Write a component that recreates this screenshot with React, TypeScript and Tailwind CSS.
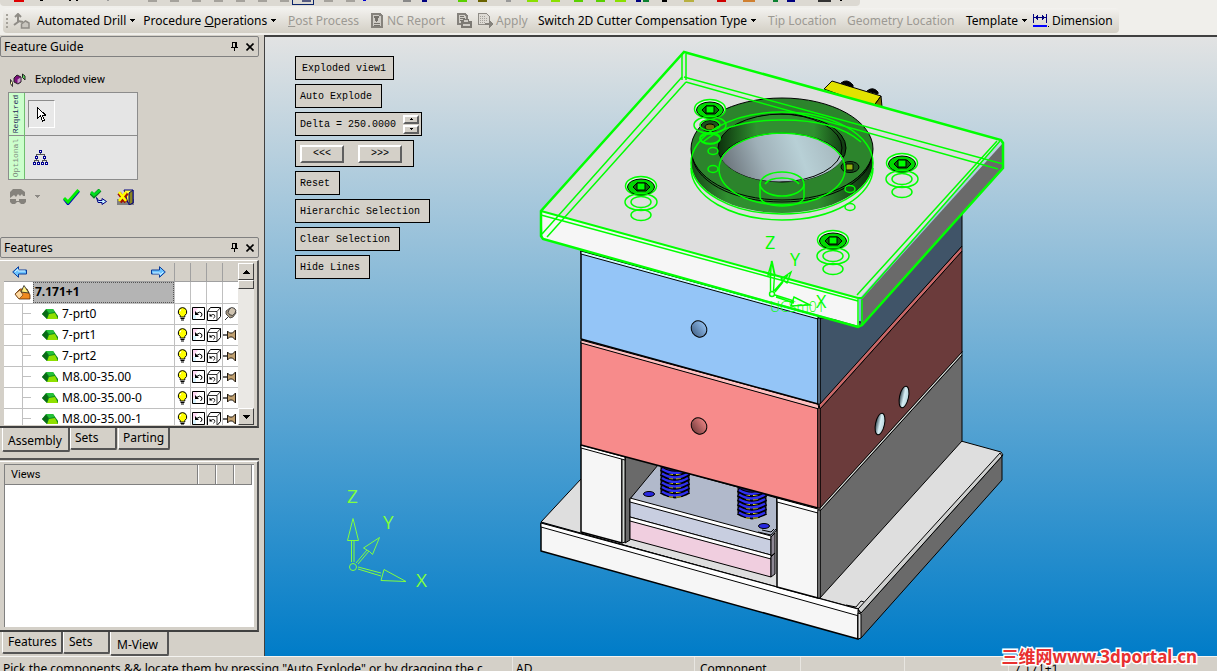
import { Fragment } from "react";
import type { ReactNode } from "react";

const uiFont = "font-['Noto_Sans','Noto_Sans_CJK_SC',sans-serif]";
const monoFont = "font-['Liberation_Mono',monospace]";

const parts = ["7-prt0", "7-prt1", "7-prt2", "M8.00-35.00", "M8.00-35.00-0", "M8.00-35.00-1"];

const screws = [
  { x: 710, y: 109 },
  { x: 641, y: 186 },
  { x: 902, y: 163 },
  { x: 833, y: 240 },
];

/* slivers of the toolbar that is scrolled off the top */
const slivers = [
  { x: 14, w: 10, c: "#e00000" }, { x: 40, w: 3, c: "#000" }, { x: 69, w: 2, c: "#000" }, { x: 76, w: 2, c: "#000" },
  { x: 107, w: 2, c: "#999" }, { x: 148, w: 9, c: "#a5a29c" }, { x: 170, w: 9, c: "#a5a29c" }, { x: 192, w: 9, c: "#a5a29c" },
  { x: 214, w: 9, c: "#a5a29c" }, { x: 236, w: 9, c: "#a5a29c" }, { x: 258, w: 9, c: "#a5a29c" }, { x: 280, w: 9, c: "#a5a29c" },
  { x: 302, w: 9, c: "#555a80" }, { x: 324, w: 9, c: "#a5a29c" }, { x: 346, w: 9, c: "#a5a29c" }, { x: 363, w: 3, c: "#0000d0" },
  { x: 403, w: 8, c: "#888" }, { x: 422, w: 5, c: "#000080" }, { x: 458, w: 9, c: "#5ad000" }, { x: 478, w: 9, c: "#6b6300" },
  { x: 506, w: 5, c: "#999" }, { x: 527, w: 11, c: "#8ae000" }, { x: 551, w: 9, c: "#8ae000" }, { x: 574, w: 9, c: "#5ad000" },
  { x: 596, w: 9, c: "#5ad000" }, { x: 615, w: 11, c: "#8ae000" }, { x: 636, w: 5, c: "#000080" }, { x: 643, w: 6, c: "#0a8030" },
  { x: 662, w: 5, c: "#000" }, { x: 684, w: 10, c: "#b8b040" }, { x: 717, w: 9, c: "#d00000" }, { x: 743, w: 12, c: "#d08030" },
  { x: 773, w: 5, c: "#0a8030" }, { x: 787, w: 8, c: "#000080" }, { x: 818, w: 13, c: "#333" }, { x: 840, w: 2, c: "#000" },
];

const Caret = ({ className = "ml-1" }: { className?: string }) => (
  <svg className={`${className} shrink-0`} width="5" height="3" shapeRendering="crispEdges">
    <path d="M0 0h5v1h-1v1h-1v1h-1v-1h-1v-1h-1z" fill="currentColor" />
  </svg>
);

const AxisIcon = () => (
  <svg width="17" height="16" viewBox="0 0 17 16" fill="none" stroke="#8f8c86" strokeWidth="2">
    <path d="M5 1v8l-4 3M2 4l3-3 3 3M5 8l5 1" />
    <path d="M8.500 11l4-3 3.500 2v5H8.500z" strokeWidth="1.500" fill="#c8c5be" />
  </svg>
);

const ReportIcon = () => (
  <svg width="12" height="15" viewBox="0 0 12 15" shapeRendering="crispEdges">
    <path d="M0 0h9l3 3v12H0z" fill="#85827c" />
    <path d="M2 2h6v1h2v10H2z" fill="#cfccc6" />
    <path d="M3 3h5v2H7v3H6v1H5V8H4V5H3zM3 10h6v1H3zM3 12h6v1H3z" fill="#75726c" />
  </svg>
);

const ReportLockIcon = () => (
  <svg width="15" height="15" viewBox="0 0 15 15" shapeRendering="crispEdges">
    <path d="M0 0h9l2 3v9H0z" fill="#85827c" />
    <path d="M2 2h6v1h1v7H2z" fill="#d2cfc8" />
    <path d="M3 3h4v1H3zM3 5h5v1H3zM3 7h3v1H3z" fill="#75726c" />
    <path d="M4 8h2V6h6v2h3v7H4z" fill="#7c7973" />
    <path d="M7 7h4v2H7zM6 11h7v2H6z" fill="#cfccc6" />
  </svg>
);

const ApplyIcon = () => (
  <svg width="16" height="15" viewBox="0 0 16 15" shapeRendering="crispEdges">
    <path d="M.5 .5h8l3 3v8H.5z" fill="#dedbd5" stroke="#8f8c86" />
    <path d="M2 3h6M2 5h8M2 7h8M2 9h6" stroke="#a5a29c" strokeDasharray="1 1" />
    <path d="M7 10h4V7l5 4-5 4v-3H7z" fill="#85827c" />
  </svg>
);

const DimensionIcon = () => (
  <svg width="16" height="13" viewBox="0 0 16 13" shapeRendering="crispEdges">
    <path d="M0 0h1v9H0zM13 0h1v9h-1zM1 3h12v1H1zM3 2h1v3H3zM2 3h1v1H2zM4 1h1v5H4zM9 1h1v5H9zM10 2h1v3h-1z" fill="#000080" />
    <path d="M0 11h14v2H0z" fill="#0000ff" />
    <path d="M15 12h1v1h-1z" fill="#000" />
  </svg>
);

const PinIcon = () => (
  <svg width="7" height="9" viewBox="0 0 7 9" shapeRendering="crispEdges">
    <path d="M1 0h5v5h1v1H4v3H3V6H0V5h1zM2 1v4h2V1z" fill="#000" fillRule="evenodd" />
  </svg>
);

const CloseIcon = () => (
  <svg width="8" height="8" viewBox="0 0 8 8">
    <path d="M.5 .5l7 7M7.500 .5l-7 7" stroke="#000" strokeWidth="1.600" />
  </svg>
);

const PanelTitle = ({ children }: { children: ReactNode }) => (
  <div className="flex h-[21px] shrink-0 items-center border border-[#808080] rounded-xs bg-[#d4d0c8] pl-[3px] pr-1">
    <h2 className="flex-1 text-[12px]">{children}</h2>
    <button type="button" aria-label="Pin panel" className="mr-2"><PinIcon /></button>
    <button type="button" aria-label="Close panel"><CloseIcon /></button>
  </div>
);

const Toolbar = () => (
  <div className="h-[35px] shrink-0 bg-[#f0efeb]">
    <div className="h-[6px] w-[860px] rounded-b-sm bg-[#dcd9d2]">
      <svg width="860" height="6" shapeRendering="crispEdges">
        {slivers.map((s) => (
          <rect key={s.x} x={s.x} y="0" width={s.w} height={s.w > 4 ? 2 : 1} fill={s.c} />
        ))}
        <path d="M292.500 0v4.500h21V0" fill="none" stroke="#0a246a" />
      </svg>
    </div>
    <div className="pt-[2px] pl-[3px]">
      <div className="flex h-[25px] w-[1116px] items-center rounded bg-linear-to-b from-[#f3f2ef] to-[#d3cfc5] text-[12px] text-black whitespace-nowrap">
        <svg width="3" height="16" className="ml-[3px] mr-1 shrink-0" shapeRendering="crispEdges">
          <path d="M1 1v14" stroke="#a5a29a" strokeWidth="2" strokeDasharray="2 2" />
        </svg>
        <div className="flex w-[266px] shrink-0 items-center">
          <AxisIcon />
          <button type="button" className="flex items-center ml-[7px]">Automated Drill<Caret /></button>
          <button type="button" className="flex items-center ml-2">
            <span>Procedure <u>O</u>perations</span><Caret />
          </button>
        </div>
        <div className="flex w-[259px] shrink-0 items-center pl-[9px] text-[#9c9993]">
          <button type="button" disabled><u>P</u>ost Process</button>
          <button type="button" disabled className="ml-3 flex items-center gap-1"><ReportIcon />NC Report</button>
          <button type="button" disabled aria-label="Lock report" className="ml-3"><ReportLockIcon /></button>
          <button type="button" disabled className="ml-[6px] flex items-center gap-[2px]"><ApplyIcon />Apply</button>
        </div>
        <button type="button" className="flex w-[230px] shrink-0 items-center">Switch 2D Cutter Compensation Type<Caret /></button>
        <button type="button" disabled className="w-[79px] shrink-0 text-left text-[#9c9993]">Tip Location</button>
        <button type="button" disabled className="w-[119px] shrink-0 text-left text-[#9c9993]">Geometry Location</button>
        <button type="button" className="flex w-[67px] shrink-0 items-center">Template<Caret /></button>
        <button type="button" className="flex items-center gap-[3px]"><DimensionIcon />Dimension</button>
      </div>
    </div>
  </div>
);

const FeatureGuide = () => (
  <section className="h-[201px] shrink-0">
    <PanelTitle>Feature Guide</PanelTitle>
    <div className="pl-2 pt-3">
      <div className="flex h-[22px] items-center gap-[9px]">
        <svg width="18" height="15" viewBox="0 0 18 15">
          <path d="M2.500 6.500l2 3v4l-2-3z" fill="#ffffb0" stroke="#333" />
          <path d="M6 5l3-3 4 2v5l-3 2-4-2z" fill="#7a107a" stroke="#222" />
          <path d="M9.500 6.500l3-2v4l-3 2z" fill="#c9a0c9" />
          <path d="M14.500 1l2.500 2v4l-2.500-2.500z" fill="#60e060" stroke="#222" />
        </svg>
        <span className="text-[11px] font-['Roboto',sans-serif]">Exploded view</span>
      </div>
      <div className={`mt-px flex w-[130px] border border-[#8c8c8c] bg-[#e5e5e5] ${monoFont}`}>
        <div className="flex w-4 flex-col border-r border-[#6fbf6f] bg-[#ccffcc]">
          <div className="flex h-[43px] items-center justify-center border-b border-[#8c8c8c]">
            <span className="-rotate-90 text-[8px] text-[#222255]">Required</span>
          </div>
          <div className="flex h-[43px] items-center justify-center">
            <span className="-rotate-90 text-[8px] text-[#7d8a7d]">Optional</span>
          </div>
        </div>
        <div className="flex flex-1 flex-col">
          <div className="flex h-[43px] items-center border-b border-[#8c8c8c] pl-[3px]">
            <button type="button" aria-label="Select component" className="flex h-[28px] w-[27px] items-center justify-center border border-t-[#8c8c8c] border-l-[#8c8c8c] border-r-white border-b-white bg-[#e8e8e8]">
              <svg width="9" height="15" viewBox="0 0 9 15" shapeRendering="crispEdges">
                <path d="M.5 .5v11l3-2.500 2 5 2-1-2-4.500h3.500z" fill="#fff" stroke="#000" />
              </svg>
            </button>
          </div>
          <div className="flex h-[43px] items-center pl-2">
            <button type="button" aria-label="Select tree">
              <svg width="15" height="15" viewBox="0 0 15 15" shapeRendering="crispEdges">
                <path d="M7 3h1v1h4v2h-1V5H4v1H3V4h4zM3 9h1v1h2v2H5v-1H2v1H1v-2h2zM11 9h1v1h2v2h-1v-1h-3v1H9v-2h2z" fill="#555" />
                <path d="M6 0h3v3H6zM2 6h3v3H2zM10 6h3v3h-3zM0 12h3v3H0zM4 12h3v3H4zM8 12h3v3H8zM12 12h3v3h-3z" fill="#000090" />
                <path d="M7 1h1v1H7zM3 7h1v1H3zM11 7h1v1h-1zM1 13h1v1H1zM5 13h1v1H5zM9 13h1v1H9zM13 13h1v1h-1z" fill="#fff" />
              </svg>
            </button>
          </div>
        </div>
      </div>
      <div className="mt-2 flex items-center">
        <button type="button" disabled aria-label="Preview" className="flex items-center text-[#8c8984]">
          <svg width="19" height="17" viewBox="0 0 19 17" fill="#85827c">
            <path d="M2 4l3-3h8l4 3v4h-2l-1-2-2 2-2-2-2 3-2-2-4 3z" />
            <path d="M2 11h6v2h3v-2h7v3l-2 2h-3l-2-2H9l-2 2H4l-2-2z" />
          </svg>
          <Caret className="ml-2" />
        </button>
        <button type="button" aria-label="OK" className="ml-[23px]">
          <svg width="17" height="16" viewBox="0 0 17 16">
            <path d="M1 10l4 5L16 2" fill="none" stroke="#0000c0" strokeWidth="2.500" />
            <path d="M1 9l4 4L15.500 1" fill="none" stroke="#00ee00" strokeWidth="3" />
          </svg>
        </button>
        <button type="button" aria-label="Apply and continue" className="ml-[10px]">
          <svg width="17" height="16" viewBox="0 0 17 16">
            <path d="M1 4l3 3 6-6" fill="none" stroke="#087a20" strokeWidth="4" />
            <path d="M1 3l3 3 6-5" fill="none" stroke="#00dd20" strokeWidth="2.500" />
            <path d="M6.500 8.500l2 3h3.500v-2l4.500 3-4.500 3v-2H8z" fill="#c0f0ff" stroke="#000080" />
          </svg>
        </button>
        <button type="button" aria-label="Exit" className="ml-[10px]">
          <svg width="17" height="16" viewBox="0 0 17 16">
            <path d="M0 10h17v6H0z" fill="#808080" />
            <path d="M7 1h9v13h-5z" fill="#ffff40" stroke="#000080" />
            <path d="M12 4l4-3v13l-4 2z" fill="#8a8420" stroke="#000080" />
            <path d="M2 4l7 9M10 4l-7 9" stroke="#a01000" strokeWidth="4" />
            <path d="M2 3l7 9M9 3l-7 9" stroke="#ffff00" strokeWidth="2.500" />
          </svg>
        </button>
      </div>
    </div>
  </section>
);

const HeaderArrow = ({ flip = false }: { flip?: boolean }) => (
  <svg width="15" height="12" viewBox="0 0 15 12" className={flip ? "rotate-180" : ""}>
    <path d="M.7 6L6.500 .7V4h8v4h-8v3.300z" fill="#6cc4ff" stroke="#0a3c9a" />
    <path d="M3 6l3-3v2h7" fill="none" stroke="#d0f0ff" />
  </svg>
);

const PartIcon = () => (
  <svg width="16" height="12" viewBox="0 0 16 12">
    <path d="M0 6l4-5h7l5 7v3H5z" fill="#0c8a1c" />
    <path d="M4 1h7l2 3-6 1z" fill="#25c03a" />
    <path d="M5 11l2-5 6-1 3 6z" fill="#8fe000" />
    <path d="M0 6l4-4 2 3-1 6z" fill="#0a6a18" />
  </svg>
);

const BulbIcon = () => (
  <svg width="11" height="14" viewBox="0 0 11 14" className="mx-auto">
    <path d="M5.500 .6a4.300 4.300 0 0 1 2.300 7.900v1.500H3.200V8.500A4.300 4.300 0 0 1 5.500 .6z" fill="#ffff00" stroke="#000" strokeWidth="1" />
    <path d="M3.500 11.500h4M4 13h3" stroke="#000" strokeWidth="1.200" />
    <path d="M4 2.500l-1 2" stroke="#fff" />
  </svg>
);

const BoxIcon = () => (
  <svg width="13" height="13" viewBox="0 0 13 13" className="mx-auto">
    <path d="M.5 .5h12v12H.5z" fill="#fff" stroke="#000" />
    <path d="M1 1h5L1 8z" fill="#ffd8f4" />
    <path d="M1 8h3v4H1z" fill="#d8f4ff" />
    <path d="M4.500 6.500Q8 4 9.500 6t-1 4" fill="none" stroke="#000" />
    <path d="M3 4v4h4z" fill="#000" />
  </svg>
);

const CubeIcon = () => (
  <svg width="14" height="14" viewBox="0 0 14 14" className="mx-auto" fill="#fff" stroke="#000">
    <path d="M.5 4.500l3-4h10v9l-3.500 4H.5z" />
    <path d="M.5 4.500H10l3.500-4M10 4.500v9" strokeWidth=".8" />
    <path d="M3.500 8.500q3-2 4-.5t-1 3.500" fill="none" strokeWidth=".8" />
    <path d="M2.500 6.500v3h3z" fill="#000" stroke="none" />
  </svg>
);

const TackIcon = ({ tilted = false }: { tilted?: boolean }) =>
  tilted ? (
    <svg width="13" height="14" viewBox="0 0 13 14" className="mx-auto" stroke="#333" strokeWidth=".8">
      <path d="M1 13l3-3" stroke="#000" />
      <path d="M2 7l4 4 3-1 3-4-1-4-5-1-4 3z" fill="#a89880" />
      <ellipse cx="8" cy="4.500" rx="3.500" ry="4" fill="#cfc3b0" transform="rotate(35 8 4.500)" />
    </svg>
  ) : (
    <svg width="14" height="12" viewBox="0 0 14 12" className="mx-auto">
      <path d="M0 6h4" stroke="#000" strokeWidth="1.200" />
      <path d="M4.500 2l2 2h3l3-3v10l-3-3h-3l-2 2z" fill="#c0a070" stroke="#221a10" />
    </svg>
  );

const ScrollButton = ({ up = false }: { up?: boolean }) => (
  <button
    type="button"
    aria-label={up ? "Scroll up" : "Scroll down"}
    className="flex h-[17px] w-4 shrink-0 items-center justify-center border border-t-white border-l-white border-r-[#404040] border-b-[#404040] bg-[#d4d0c8]"
  >
    <svg width="7" height="4" className={up ? "rotate-180" : ""} shapeRendering="crispEdges">
      <path d="M0 0h7v1h-1v1h-1v1h-1v1h-1v-1h-1v-1h-1v-1h-1z" />
    </svg>
  </button>
);

const Features = () => (
  <section className="shrink-0">
    <PanelTitle>Features</PanelTitle>
    <div className="mt-[2px] flex h-[168px] border-t border-t-white border-r-2 border-b-2 border-r-[#555] border-b-[#404040] pl-1 pr-[3px] pt-[2px] pb-px">
      <div className="flex-1 overflow-hidden bg-white">
        <table className="w-full table-fixed border-collapse text-[12px]">
          <colgroup>
            <col />
            <col className="w-4" />
            <col className="w-4" />
            <col className="w-4" />
            <col className="w-4" />
          </colgroup>
          <thead>
            <tr className="h-[18px] bg-[#d4d0c8]">
              <th className="border-b border-[#a0a0a0] px-2 py-0">
                <div className="flex justify-between">
                  <HeaderArrow />
                  <HeaderArrow flip />
                </div>
              </th>
              {[0, 1, 2, 3].map((n) => (
                <th key={n} className="border-l border-b border-[#a0a0a0] p-0" />
              ))}
            </tr>
          </thead>
          <tbody>
            <tr className="h-[22px]">
              <td className="border-b border-[#c0c0c0] p-0">
                <div className="flex h-[21px] items-center">
                  <svg width="17" height="15" viewBox="0 0 17 15" className="ml-[10px] mr-[2px] shrink-0">
                    <path d="M1 9l5-5h7l3 6v4H5z" fill="#f08a20" stroke="#5a2a00" strokeWidth=".8" />
                    <path d="M1 9l5-4 3 5-4 4z" fill="#ffd9a0" stroke="#5a2a00" strokeWidth=".6" />
                    <path d="M7 7l3-6.500L15 8z" fill="#fff080" stroke="#222" strokeWidth=".8" />
                  </svg>
                  <span className="flex h-[21px] flex-1 items-center border border-dotted border-[#555] bg-[#b4b4b4] pl-px font-bold">7.171+1</span>
                </div>
              </td>
              {[0, 1, 2, 3].map((n) => (
                <td key={n} className="border-l border-b border-[#c0c0c0]" />
              ))}
            </tr>
            {parts.map((name, i) => (
              <tr key={name} className="h-[21px]">
                <td className="border-b border-[#c0c0c0] p-0">
                  <div className="flex h-5 items-center">
                    <span className="ml-[18px] flex h-5 w-5 shrink-0 items-center border-l border-[#c0c0c0]">
                      <span className="h-px w-2 bg-[#c0c0c0]" />
                    </span>
                    <PartIcon />
                    <span className="ml-1">{name}</span>
                  </div>
                </td>
                <td className="border-l border-b border-[#c0c0c0] p-0"><BulbIcon /></td>
                <td className="border-l border-b border-[#c0c0c0] p-0"><BoxIcon /></td>
                <td className="border-l border-b border-[#c0c0c0] p-0"><CubeIcon /></td>
                <td className="border-l border-b border-[#c0c0c0] p-0"><TackIcon tilted={i === 0} /></td>
              </tr>
            ))}
          </tbody>
        </table>
      </div>
      <div className="flex w-4 flex-col bg-[#eae8e4]">
        <ScrollButton up />
        <div className="h-[9px] border border-t-white border-l-white border-r-[#404040] border-b-[#404040] bg-[#d4d0c8]" />
        <div className="flex-1" />
        <ScrollButton />
      </div>
    </div>
  </section>
);

const Tab = ({ active = false, className, children }: { active?: boolean; className: string; children: ReactNode }) => (
  <button
    type="button"
    className={`${className} shrink-0 border-l border-l-white border-r-2 border-b-2 border-r-[#555] border-b-[#555] rounded-b-xs text-left text-[12px] leading-4 ${
      active ? "h-6 pt-1" : "h-[22px]"
    }`}
  >
    {children}
  </button>
);

const Views = () => (
  <section className="mt-[6px] flex min-h-0 flex-1 flex-col border-t-2 border-t-[#555]">
    <div className="mt-px flex flex-1 flex-col border-t border-t-white border-r-2 border-b-2 border-r-[#555] border-b-[#404040] pl-1 pr-[3px] pt-[2px] pb-[3px]">
      <div className="flex-1 border-t border-l border-[#808080] bg-white pr-[2px]">
        <div className="flex h-5 border-r border-b border-[#808080] bg-[#d4d0c8] text-[11px]">
          <h2 className="flex-1 pl-[6px] leading-[19px] font-['Roboto',sans-serif]">Views</h2>
          {[0, 1, 2].map((n) => (
            <span key={n} className="w-[18px] border-l border-[#808080] shadow-[inset_1px_0_0_#fff]" />
          ))}
        </div>
      </div>
    </div>
  </section>
);

const Box = ({ children }: { children: ReactNode }) => (
  <button type="button" className="h-6 border border-black bg-[#d4d0c8] pl-1 pr-[9px] text-left">
    {children}
  </button>
);

const raised = "border-2 border-t-white border-l-white border-r-[#606060] border-b-[#606060] bg-[#d4d0c8]";

const ExplodePanel = () => (
  <div className={`relative flex w-[150px] flex-col items-start gap-1 pl-[30px] pt-[19px] text-[10px] text-black whitespace-nowrap ${monoFont}`}>
    <div className="flex h-6 items-center border border-black bg-[#d4d0c8] pl-[6px] pr-[7px]">Exploded view1</div>
    <Box>Auto Explode</Box>
    <div className="flex h-6 items-center border border-black bg-[#d4d0c8] pl-1 pr-[2px]">
      <label htmlFor="delta">Delta =&nbsp;</label>
      <input id="delta" type="text" defaultValue="250.0000" className="w-[54px] bg-transparent outline-none" />
      <span className="ml-px flex flex-col">
        <button type="button" aria-label="Increase delta" className={`${raised} flex h-[9px] w-4 items-center justify-center`}>
          <svg width="3" height="2" shapeRendering="crispEdges"><path d="M1 0h1v1h1v1H0V1h1z" /></svg>
        </button>
        <button type="button" aria-label="Decrease delta" className={`${raised} mt-px flex h-[9px] w-4 items-center justify-center`}>
          <svg width="3" height="2" shapeRendering="crispEdges"><path d="M0 0h3v1H2v1H1V1H0z" /></svg>
        </button>
      </span>
    </div>
    <div className="flex h-[27px] items-center gap-[14px] border border-black bg-[#d4d0c8] pl-1 pr-[11px]">
      <button type="button" className={`${raised} h-[18px] w-11 leading-3`}>&lt;&lt;&lt;</button>
      <button type="button" className={`${raised} h-[18px] w-11 leading-3`}>&gt;&gt;&gt;</button>
    </div>
    <Box>Reset</Box>
    <Box>Hierarchic Selection</Box>
    <Box>Clear Selection</Box>
    <Box>Hide Lines</Box>
  </div>
);

const Spring = ({ x, y }: { x: number; y: number }) => (
  <g>
    <path d={`M${x - 14} ${y - 4}h28v26q-14 12 -28 0z`} fill="#1a1a70" />
    {[0, 1, 2, 3, 4, 5].map((n) => (
      <Fragment key={n}>
        <path d={`M${x - 14} ${y + n * 4.5 - 1}q14 8 28 0`} fill="none" stroke="#000" strokeWidth="4.400" />
        <path d={`M${x - 13} ${y + n * 4.5 - 1}q13 8 26 0`} fill="none" stroke="#3030f0" strokeWidth="2.400" />
        <path d={`M${x - 6} ${y + n * 4.5 + 4.5}h4m3 0h5`} stroke="#e8e020" />
      </Fragment>
    ))}
  </g>
);

const Screw = ({ x, y }: { x: number; y: number }) => (
  <g fill="none" stroke="#00ff00" strokeWidth="1.500">
    <ellipse cx={x} cy={y} rx="15.500" ry="9.500" fill="#e8f8e8" />
    <ellipse cx={x} cy={y + 1} rx="13.500" ry="8" fill="#00d800" stroke="#000" strokeWidth="1" />
    <path d={`M${x - 8} ${y + 1}l4 -4h9l4 4l-4 4h-9z`} fill="#0a6a0a" stroke="#000" strokeWidth="1" />
    <path d={`M${x - 4} ${y - 3}h8v7h-8z`} fill="#00ff00" stroke="#000" strokeWidth="1" />
    <ellipse cx={x} cy={y + 16} rx="16" ry="8.500" />
    <ellipse cx={x} cy={y + 16} rx="10" ry="5.500" />
    <ellipse cx={x} cy={y + 29} rx="10" ry="5.500" />
  </g>
);

const Axes = () => (
  <g fill="none" stroke="#80ff40" strokeWidth="1">
    <circle cx="353" cy="567" r="3.500" />
    <path d="M351.500 562V541M354 562V541M347.500 540.500l5.500-22 5.500 22z" />
    <path d="M356 563l11-13M358 564l11-13M363.500 548l16-10.500-7 17-3-3z" />
    <path d="M358 567l23 6M358 569l23 7M381 580.500l3-11 22 12z" />
  </g>
);

const Mold = () => (
  <svg className="absolute inset-0 h-full w-full" viewBox="265 37 952 619" preserveAspectRatio="xMinYMin meet">
    <defs>
      <linearGradient id="bowl" x1="0" x2="1" y1="0.200" y2="0">
        <stop offset="0" stopColor="#6c757c" />
        <stop offset="0.300" stopColor="#9fb0b8" />
        <stop offset="0.600" stopColor="#b8d0d6" />
        <stop offset="1" stopColor="#a0b0b6" />
      </linearGradient>
      <linearGradient id="wall" x1="0" x2="1">
        <stop offset="0" stopColor="#0c300c" />
        <stop offset="0.300" stopColor="#309030" />
        <stop offset="0.750" stopColor="#309030" />
        <stop offset="1" stopColor="#103810" />
      </linearGradient>
      <linearGradient id="rim" x1="0" x2="1">
        <stop offset="0" stopColor="#184818" />
        <stop offset="0.200" stopColor="#2f8f2f" />
        <stop offset="0.700" stopColor="#2f8f2f" />
        <stop offset="1" stopColor="#0c2c0c" />
      </linearGradient>
      <linearGradient id="bore" x1="0" x2="1">
        <stop offset="0" stopColor="#354a54" />
        <stop offset="0.500" stopColor="#d6eef4" />
        <stop offset="1" stopColor="#b8d4dc" />
      </linearGradient>
      <linearGradient id="blueBore" x1="0" x2="1">
        <stop offset="0" stopColor="#4a6a90" />
        <stop offset="1" stopColor="#8fbdee" />
      </linearGradient>
      <linearGradient id="redBore" x1="0" x2="1">
        <stop offset="0" stopColor="#7a4040" />
        <stop offset="1" stopColor="#e88080" />
      </linearGradient>
      <clipPath id="hole">
        <ellipse cx="782" cy="148" rx="64" ry="34" />
      </clipPath>
    </defs>

    <g stroke="#000" strokeWidth="1" strokeLinejoin="round">
      {/* base plate */}
      <path d="M541 522L581 479L961 441L1001 452L1003 455L858 610z" fill="#dedede" />
      <path d="M541 523L858 609V639L541 551z" fill="#f6f6f6" strokeWidth="1.500" />
      <path d="M541 523L858 609L861 612L859 616L541 527z" fill="#fff" />
      <path d="M858 610l3 3L1002 456V480L861 638L858 639z" fill="#6a6a6a" />
      <path d="M858 609L1000 453L1002 456L861 613z" fill="#cfd0cf" />
      <path d="M858 613v26l3-1v-24z" fill="#e0e0e0" />
      <path d="M846 605l10 2 5-6 3 1" fill="none" />

      {/* ejector plates */}
      <path d="M625 456L660 465L630 499V540L625 543z" fill="#6a6a6a" />
      <path d="M658 465L777 498V530L771 537L630 499z" fill="#b1b9cb" />
      <path d="M630 499L771 537V555L630 517z" fill="#c8cee0" />
      <path d="M630 498L771 536V540L630 502z" fill="#fff" />
      <path d="M630 520L771 558V577L630 539z" fill="#f0cedf" />
      <path d="M630 517L771 555V559L630 521z" fill="#fff" />
      <path d="M771 537l4-4v20l-4 3zM771 557l4-4v21l-4 3z" fill="#8e8894" />
      <path d="M758 532l13 3 5-6M762 530l9 2 3-3" fill="none" />
      <Spring x={675} y={470} />
      <Spring x={752} y={491} />
      <ellipse cx="649" cy="494" rx="5.500" ry="2.500" fill="#2828e0" />
      <ellipse cx="764" cy="526" rx="5.500" ry="2.500" fill="#2828e0" />

      {/* legs */}
      <path d="M581 445L622 456V543L581 532z" fill="#f6f6f6" strokeWidth="1.500" />
      <path d="M622 458l3-2v86l-3 1z" fill="#d0d4d0" />
      <path d="M581 445L625 457V460L581 448z" fill="#fff" />
      <path d="M777 498L818 510V598L777 587z" fill="#f6f6f6" strokeWidth="1.500" />
      <path d="M777 498L818 509V513L777 502z" fill="#fff" />
      <path d="M820 511L962 355V441L820 598z" fill="#6a6a6a" />
      <path d="M820 507L962 351V355L820 511z" fill="#cfd3cf" />
      <path d="M818 510h2v88h-2z" fill="#e0e0e0" />

      {/* cavity plates */}
      <path d="M581 342L818 408V508L581 445z" fill="#f78b8b" strokeWidth="1.500" />
      <path d="M581 340L818 404L819 409L581 343z" fill="#ffc0c0" />
      <path d="M820 409L962 251V352L820 508z" fill="#6b3b3b" />
      <path d="M819 404L962 246V251L820 409z" fill="#c86868" />
      <path d="M818 408h2v100h-2z" fill="#d87878" />
      <path d="M581 251L818 318V404L581 339z" fill="#94c5f7" strokeWidth="1.500" />
      <path d="M581 251L818 316V319L581 254z" fill="#d0ffff" />
      <path d="M820 318L861 322L962 211V246L820 404z" fill="#405468" />
      <path d="M818 318h2v86h-2z" fill="#a8d4ff" />
      <ellipse cx="699" cy="329" rx="7.500" ry="8.500" fill="url(#blueBore)" transform="rotate(-35 699 329)" />
      <ellipse cx="699" cy="426" rx="7.500" ry="8.500" fill="url(#redBore)" transform="rotate(-35 699 426)" />
      <ellipse cx="904" cy="397" rx="4.500" ry="11" fill="url(#bore)" transform="rotate(12 904 397)" />
      <ellipse cx="880" cy="424" rx="4.500" ry="11" fill="url(#bore)" transform="rotate(12 880 424)" />

      {/* connector behind the top plate */}
      <path d="M832 81L881 96L873 107L824 89z" fill="#e2e200" />
      <path d="M881 96l1 11-9 0z" fill="#7a7000" />
      <path d="M841 83q6-5 12 2v2zM867 91q6-5 11 1v2z" fill="#000" />
    </g>

    {/* clamping plate */}
    <path d="M684 52L1001 140L859 299L541 211z" fill="#dedede" />
    <path d="M541 211L859 299V326L543 239z" fill="#f6f6f6" />
    <path d="M861 300L1003 143V168L861 326z" fill="#6a6a6a" />

    {/* locating ring */}
    <path d="M691 149v13a91 51 0 0 0 182 0v-13z" fill="url(#rim)" />
    <ellipse cx="782" cy="149" rx="91" ry="51" fill="#2c842c" stroke="#000" />
    <path d="M692 153a90 49 0 0 0 180 0" fill="none" stroke="#000" />
    <ellipse cx="782" cy="148" rx="64" ry="34" fill="url(#wall)" stroke="#000" />
    <g clipPath="url(#hole)">
      <ellipse cx="782" cy="167" rx="64" ry="34" fill="url(#bowl)" stroke="#000" />
      <ellipse cx="779" cy="148" rx="63" ry="34" fill="none" stroke="#000" />
    </g>
    <g fill="#1c501c" stroke="#000">
      <ellipse cx="710" cy="126" rx="9" ry="5.500" />
      <ellipse cx="710" cy="127" rx="5" ry="3" fill="#707010" />
      <ellipse cx="850" cy="167" rx="9" ry="5.500" />
      <path d="M846 164h7v6h-7z" fill="#90b010" />
    </g>

    {screws.map((s) => (
      <Screw key={s.x} x={s.x} y={s.y} />
    ))}

    <g fill="none" stroke="#00ff00" strokeWidth="1.500">
      <ellipse cx="782" cy="163" rx="91" ry="51" />
      <path d="M691 168a91 52 0 0 0 182 0" />
      <ellipse cx="782" cy="169" rx="63" ry="36" />
      <path d="M703 142q25-22 79-22t79 22" />
      <ellipse cx="782" cy="184" rx="22" ry="12" />
      <path d="M765 184q4-6 17-6t17 6" />
      <path d="M760 184v13a22 9 0 0 0 44 0v-13" />
      <ellipse cx="710" cy="139" rx="10" ry="5" />
      <ellipse cx="713" cy="151" rx="5" ry="3.500" />
      <ellipse cx="713" cy="169" rx="5" ry="3.500" />
      <ellipse cx="850" cy="189" rx="5" ry="3.500" />
      <ellipse cx="850" cy="207" rx="5" ry="3.500" />

      <path d="M684 77L1003 164M686 82L998 169M682 77L542 234M686 82L547 237M541 215L858 301M997 141L857 295" />
      <path d="M682 54V80M686 54V80M1000 141L861 299M858 299V326M862 300V326" />
    </g>
    <path d="M684 52L1001 140L1003 143V168L862 325L858 327L543 239L541 236V211z" fill="none" stroke="#00ff00" strokeWidth="2.500" />
    <path d="M541 211L858 298L862 298" fill="none" stroke="#00ff00" strokeWidth="2" />

    {/* part coordinate system */}
    <g fill="none" stroke="#00ff00" strokeWidth="1.400">
      <circle cx="772" cy="294" r="2.500" />
      <path d="M770.500 291v-16l1-14 3 14-1 16M772 261l-4 14h7zM774 291l14-16M775 292l8-10M781 279l10-7-4 11zM775 295l19 6M776 297l18 6M791 306l3-9 16 8z" />
    </g>
    <g fill="#00ff00" className="font-['Open_Sans',sans-serif] text-[18px]">
      <text x="765" y="249">Z</text>
      <text x="790" y="266">Y</text>
      <text x="816" y="308">X</text>
      <text x="770" y="312" className="text-[14px] font-light">UCSm01</text>
    </g>

    <Axes />
    <g fill="#80ff40" className="font-['Open_Sans',sans-serif] text-[19px]">
      <text x="347" y="503">Z</text>
      <text x="383" y="529">Y</text>
      <text x="416" y="587">X</text>
    </g>
  </svg>
);

const StatusBar = () => (
  <footer className="flex h-[15px] shrink-0 overflow-hidden border-t border-[#f4f3f0] bg-[#d4d0c8] text-[12px] leading-4 whitespace-nowrap">
    <p className="h-5 w-[512px] shrink-0 overflow-hidden pl-[3px] pt-1">Pick the components &amp;&amp; locate them by pressing &quot;Auto Explode&quot; or by dragging the c</p>
    <p className="h-5 w-[182px] shrink-0 border-l border-[#e8e6e1] pl-[3px] pt-1">AD</p>
    <p className="h-5 w-[106px] shrink-0 border-l border-[#e8e6e1] pl-[5px] pt-1">Component</p>
    <p className="h-5 w-[104px] shrink-0 border-l border-[#e8e6e1]" />
    <p className="h-5 w-[104px] shrink-0 border-l border-[#e8e6e1]" />
    <p className="h-5 flex-1 border-l border-[#e8e6e1] pl-[5px] pt-1">7.171+1</p>
  </footer>
);

export default function App() {
  return (
    <div className={`relative flex h-screen flex-col overflow-hidden bg-[#d4d0c8] text-black ${uiFont}`}>
      <Toolbar />
      <div className="flex min-h-0 flex-1">
        <aside className="flex w-[259px] shrink-0 flex-col pt-px">
          <FeatureGuide />
          <Features />
          <div className="flex h-6 shrink-0 items-start pl-[2px]">
            <Tab active className="w-[68px] pl-[5px]">Assembly</Tab>
            <Tab className="w-[47px] pl-1">Sets</Tab>
            <Tab className="ml-px w-[52px] pl-1">Parting</Tab>
          </div>
          <Views />
          <div className="flex h-6 shrink-0 items-start pl-[2px]">
            <Tab className="w-[61px] pl-[5px]">Features</Tab>
            <Tab className="w-[47px] pl-[5px]">Sets</Tab>
            <Tab active className="w-[59px] pl-[6px]">M-View</Tab>
          </div>
        </aside>
        <main className="relative ml-[5px] flex-1 overflow-hidden border-t-2 border-l border-[#404040] bg-[linear-gradient(to_bottom,#e2e3e3,#007cc8)]">
          <Mold />
          <ExplodePanel />
        </main>
      </div>
      <StatusBar />
      <p className="absolute right-[20px] bottom-0 text-[17px] leading-[28px] font-bold text-[#e83030] whitespace-nowrap [-webkit-text-stroke:3px_white] [paint-order:stroke_fill]">
        三维网www.3dportal.cn
      </p>
    </div>
  );
}
